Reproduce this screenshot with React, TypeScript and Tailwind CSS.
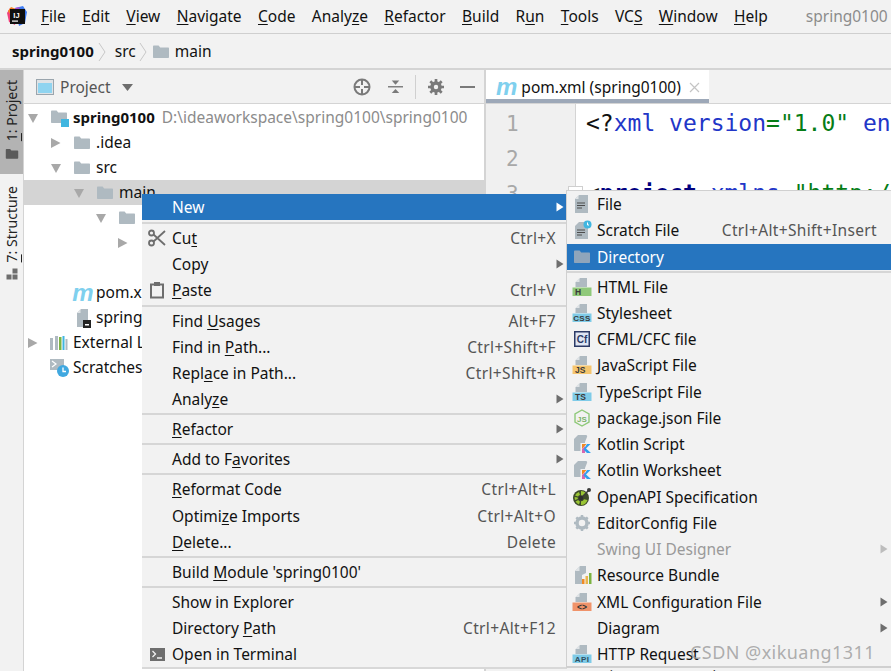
import { ReactNode } from "react"

const folderPath = "M1 3.5C1 3 1.4 2.5 2 2.5h4.6l1.6 2H16c.6 0 1 .4 1 1V14c0 .6-.4 1-1 1H2c-.6 0-1-.4-1-1z"

function Folder({ color = "#afbac1" }: { color?: string }) {
  return (
    <svg width="18" height="18" viewBox="0 0 18 18" className="shrink-0">
      <path d={folderPath} fill={color} />
    </svg>
  )
}

function Arrow({ dir, color = "#a8a8a8" }: { dir: "down" | "right"; color?: string }) {
  return (
    <svg width="12" height="12" viewBox="0 0 12 12" className="shrink-0">
      <path d={dir === "down" ? "M0 2h10L5 11z" : "M0 1v10L9.500 6z"} fill={color} />
    </svg>
  )
}

function Mnemonic({ text }: { text: string }) {
  const i = text.indexOf("_")
  if (i < 0) return <>{text}</>
  return (
    <>
      {text.slice(0, i)}
      <u className="underline-offset-2">{text[i + 1]}</u>
      {text.slice(i + 2)}
    </>
  )
}

function MavenIcon() {
  return (
    <span className="font-['Liberation_Sans',sans-serif] text-[24px] leading-[18px] font-bold italic text-[#7fd0ee] w-[20px] flex justify-center">
      m
    </span>
  )
}

function PageBase({ children }: { children?: ReactNode }) {
  return (
    <svg width="20" height="20" viewBox="0 0 20 20" className="shrink-0">
      <path d="M8 1h7v9H3.500V5.500z" fill="#afbac1" />
      <path d="M3.500 5 7.500 1v4z" fill="#dfe3e6" />
      {children}
    </svg>
  )
}

function FileIcon() {
  return (
    <svg width="20" height="20" viewBox="0 0 20 20" className="shrink-0">
      <path d="M7 1h9v18H3V5z" fill="#afbac1" />
      <path d="M3 5l3.500-4v4z" fill="#dfe3e6" />
      <path d="M5 9h8M5 11.500h8M5 14h5" stroke="#4d4d4d" strokeWidth="1.200" />
    </svg>
  )
}

function BandFile({ band, label, text = "#3a3a3a", full }: { band: string; label: string; text?: string; full?: boolean }) {
  return (
    <PageBase>
      <rect x="0.500" y="10.500" width="19" height="8.500" fill={band} />
      <text
        x={full ? 10 : 3}
        y="17.800"
        fontSize={label.length > 2 ? 8 : 8.500}
        fontWeight="700"
        letterSpacing={label.length > 2 ? 0.4 : 0}
        textAnchor={full ? "middle" : "start"}
        fill={text}
        fontFamily="Liberation Sans, sans-serif"
      >
        {label}
      </text>
    </PageBase>
  )
}

function KotlinIcon() {
  return (
    <svg width="20" height="20" viewBox="0 0 20 20" className="shrink-0">
      <path d="M6 1h8c1 0 1.500 1 1 2l-2 5v2H9v7H3c-.6 0-1-.4-1-1V5z" fill="#afbac1" />
      <rect x="8.500" y="9" width="11" height="11" fill="#f2f2f2" />
      <path d="M10 10h4.500L10 15z" fill="#f08a24" />
      <path d="M10 15l3-3v7h-3z" fill="#d866b0" />
      <path d="M15 10h3.500L14 14.500l5 4.500h-4l-3.500-3.500z" fill="#2f9fee" />
    </svg>
  )
}

function SubArrow({ color = "#6e6e6e" }: { color?: string }) {
  return (
    <svg width="8" height="10" viewBox="0 0 8 10" className="absolute right-[3px] top-[8px]">
      <path d="M0.500 0.500v9L7.500 5z" fill={color} />
    </svg>
  )
}

type RowProps = {
  label: string
  shortcut?: string
  icon?: ReactNode
  sub?: boolean
  disabled?: boolean
  active?: boolean
  // one pixel lower than the regular 26px pitch
  lower?: boolean
  inset?: boolean
}

function Row({ label, shortcut, icon, sub, disabled, active, lower, inset }: RowProps) {
  return (
    <div
      className={
        "relative flex items-center shrink-0 h-[26px] " +
        (inset ? "pr-[14px] " : "pr-[11px] ") +
        (lower ? "mt-[1px] " : "") +
        (active ? "bg-[#2675bf] text-white " : disabled ? "text-[#9a9a9a] " : "text-[#111] ")
      }
    >
      <span className="w-[30px] shrink-0 flex justify-center">{icon}</span>
      <span className="whitespace-nowrap pt-[2px]">
        <Mnemonic text={label} />
      </span>
      {shortcut && <span className="ml-auto pt-[2px] text-[#555] tracking-[0.35px]">{shortcut}</span>}
      {sub && <SubArrow color={active ? "#fff" : disabled ? "#bdbdbd" : "#6e6e6e"} />}
    </div>
  )
}

function Sep({ h }: { h: string }) {
  return (
    <div className={"flex items-center shrink-0 " + h}>
      <div className="h-[2px] w-full bg-[#d6d6d6]" />
    </div>
  )
}

function ContextMenu() {
  return (
    <div className="absolute left-[142px] top-[194px] w-[425px] h-[475px] bg-[#f2f2f2] flex flex-col border-b-2 border-[#d8d8d8] text-[15.500px]">
      <Row label="New" active sub />
      <Sep h="h-[5px]" />
      <Row
        label="Cu_t"
        shortcut="Ctrl+X"
        icon={
          <svg width="20" height="20" viewBox="0 0 20 20">
            <circle cx="4.500" cy="5" r="2.500" fill="none" stroke="#6e6e6e" strokeWidth="1.800" />
            <circle cx="4.500" cy="15" r="2.500" fill="none" stroke="#6e6e6e" strokeWidth="1.800" />
            <path d="M6.500 6.500 18 17M6.500 13.500 18 3" stroke="#6e6e6e" strokeWidth="1.800" />
          </svg>
        }
      />
      <Row label="Copy" sub />
      <Row
        label="_Paste"
        shortcut="Ctrl+V"
        icon={
          <svg width="18" height="18" viewBox="0 0 18 18">
            <rect x="3" y="3.500" width="12" height="13" fill="none" stroke="#6e6e6e" strokeWidth="2" />
            <rect x="6" y="1" width="6" height="4" fill="#6e6e6e" />
          </svg>
        }
      />
      <Sep h="h-[5px]" />
      <Row label="Find _Usages" shortcut="Alt+F7" />
      <Row label="Find in _Path..." shortcut="Ctrl+Shift+F" />
      <Row label="Repl_ace in Path..." shortcut="Ctrl+Shift+R" />
      <Row label="Analy_ze" sub />
      <Sep h="h-[4px]" />
      <Row label="_Refactor" sub />
      <Sep h="h-[4px]" />
      <Row label="Add to F_avorites" sub />
      <Sep h="h-[4px]" />
      <Row label="_Reformat Code" shortcut="Ctrl+Alt+L" />
      <Row label="Optimi_ze Imports" shortcut="Ctrl+Alt+O" lower />
      <Row label="_Delete..." shortcut="Delete" />
      <Sep h="h-[4px]" />
      <Row label="Build _Module 'spring0100'" />
      <Sep h="h-[4px]" />
      <Row label="Show in Explorer" />
      <Row label="Directory _Path" shortcut="Ctrl+Alt+F12" />
      <Row
        label="Open in Terminal"
        icon={
          <svg width="15" height="13" viewBox="0 0 15 13">
            <rect width="15" height="13" fill="#6e6e6e" />
            <path d="M2.500 3l3 3-3 3M7 10h5" stroke="#f2f2f2" strokeWidth="1.300" fill="none" />
          </svg>
        }
      />
    </div>
  )
}

function NewSubmenu() {
  return (
    <div className="absolute left-[566px] top-[190px] w-[325px] h-[478px] bg-[#f2f2f2] border-l border-t border-b-2 border-[#d0d0d0] flex flex-col text-[15.500px]">
      <Row label="File" inset icon={<FileIcon />} />
      <Row
        label="Scratch File"
        inset
        shortcut="Ctrl+Alt+Shift+Insert"
        icon={
          <svg width="20" height="20" viewBox="0 0 20 20">
            <path d="M7 2h9v17H3V6z" fill="#afbac1" />
            <path d="M5 10h8M5 12.500h8M5 15h5" stroke="#4d4d4d" strokeWidth="1.200" />
            <circle cx="15.500" cy="4.500" r="4" fill="#40b6e0" />
            <path d="M15.500 2.500v2.500h1.500" stroke="#fff" strokeWidth="1" fill="none" />
          </svg>
        }
      />
      <Row label="Directory" active lower inset icon={<Folder color="#8fa5bb" />} />
      <Sep h="h-[4px]" />
      <Row label="HTML File" inset icon={<BandFile band="#8fc97a" label="H" />} />
      <Row label="Stylesheet" inset icon={<BandFile band="#7fcbe8" label="CSS" full />} />
      <Row
        label="CFML/CFC file"
        inset
        icon={
          <svg width="16" height="16" viewBox="0 0 16 16">
            <rect x="0.750" y="0.750" width="14.500" height="14.500" fill="#dfe6f4" stroke="#2c3a66" strokeWidth="1.500" />
            <text x="8" y="12" fontSize="10" fontWeight="700" textAnchor="middle" fill="#2c3a66" fontFamily="Liberation Sans, sans-serif">
              Cf
            </text>
          </svg>
        }
      />
      <Row label="JavaScript File" inset icon={<BandFile band="#f5c56e" label="JS" />} />
      <Row label="TypeScript File" inset lower icon={<BandFile band="#7fcbe8" label="TS" />} />
      <Row
        label="package.json File"
        inset
        icon={
          <svg width="18" height="18" viewBox="0 0 18 18">
            <path d="M9 1l7 4v8l-7 4-7-4V5z" fill="none" stroke="#8fc97a" strokeWidth="1.400" />
            <text x="9" y="12.500" fontSize="8" fontWeight="700" textAnchor="middle" fill="#7cb36a" fontFamily="Liberation Sans, sans-serif">
              JS
            </text>
          </svg>
        }
      />
      <Row label="Kotlin Script" inset icon={<KotlinIcon />} />
      <Row label="Kotlin Worksheet" inset icon={<KotlinIcon />} />
      <Row
        label="OpenAPI Specification"
        lower
        inset
        icon={
          <svg width="20" height="20" viewBox="0 0 20 20">
            <circle cx="9" cy="11" r="8" fill="#3d4a2a" />
            <path d="M9 4a7 7 0 0 1 5 2l-3 3a3 3 0 0 0-2-.800zM3 8.500a7 7 0 0 1 4-3.500l1 3a3 3 0 0 0-2 1.500zM3 13a7 7 0 0 1-.300-3l3 .500a3 3 0 0 0 .200 1.500zM7 17.500a7 7 0 0 1-3.500-3l2.800-1.500a3 3 0 0 0 1.700 1.500zM15.500 13a7 7 0 0 1-6.500 5v-3.800a3 3 0 0 0 3-2z" fill="#9ac534" />
            <path d="M9 11 17 3" stroke="#3a3a3a" strokeWidth="1.500" />
            <circle cx="17" cy="3" r="2" fill="#3a3a3a" />
            <circle cx="9" cy="11" r="2.200" fill="#2f2f2f" />
          </svg>
        }
      />
      <Row
        label="EditorConfig File"
        inset
        icon={
          <svg width="18" height="18" viewBox="0 0 18 18">
            <circle cx="9" cy="9" r="5" fill="none" stroke="#afbac1" strokeWidth="3.500" />
            <path d="M9 1v3M9 14v3M1 9h3M14 9h3M3.300 3.300l2.200 2.200M12.500 12.500l2.200 2.200M3.300 14.700l2.200-2.200M12.500 5.500l2.200-2.200" stroke="#afbac1" strokeWidth="2.500" />
          </svg>
        }
      />
      <Row label="Swing UI Designer" disabled sub inset />
      <Row
        label="Resource Bundle"
        inset
        icon={
          <svg width="20" height="20" viewBox="0 0 20 20">
            <path d="M8 1h6v7l-4 2v9H3V6z" fill="#afbac1" />
            <path d="M3 6l4.500-5v5z" fill="#dfe3e6" />
            <rect x="10" y="14" width="2.500" height="5" fill="#f08a24" />
            <rect x="13.500" y="11" width="2.500" height="8" fill="#e9b44c" />
            <rect x="17" y="8" width="2.500" height="11" fill="#7cb342" />
          </svg>
        }
      />
      <Row label="XML Configuration File" sub lower inset icon={<BandFile band="#f0936a" label="<>" text="#333" full />} />
      <Row label="Diagram" sub inset />
      <Row label="HTTP Request" inset icon={<BandFile band="#7fcbe8" label="API" text="#2f4f5f" full />} />
    </div>
  )
}

function TreeRow({ pad, arrow, icon, selected, children }: { pad: string; arrow?: "down" | "right"; icon?: ReactNode; selected?: boolean; children?: ReactNode }) {
  return (
    <div className={"flex items-center h-[25px] whitespace-nowrap " + pad + (selected ? " bg-[#d4d4d4]" : "")}>
      <span className="w-[22px] shrink-0 flex">{arrow && <Arrow dir={arrow} />}</span>
      <span className="w-[23px] shrink-0 flex justify-start">{icon}</span>
      {children}
    </div>
  )
}

function Chevron({ className }: { className: string }) {
  return (
    <svg width="10" height="20" viewBox="0 0 10 20" className={className}>
      <path d="M2 1l6 9-6 9" fill="none" stroke="#c8c8c8" />
    </svg>
  )
}

export default function App() {
  const menus = ["_File", "_Edit", "_View", "_Navigate", "_Code", "Analy_ze", "_Refactor", "_Build", "R_un", "_Tools", "VC_S", "_Window", "_Help"]

  return (
    <div className="relative w-[891px] h-[671px] overflow-hidden bg-[#f2f2f2] flex flex-col font-['Noto_Sans',sans-serif] text-[15.500px] text-[#111]">
      {/* menu bar */}
      <div className="h-[34px] shrink-0 flex items-center border-b border-[#cfcfcf] pl-[6px]">
        <svg width="22" height="22" viewBox="0 0 22 22" className="shrink-0 mr-[13px]">
          <path d="M1 7l3-5 7 1-2 16-6-3z" fill="#f0407a" />
          <path d="M2 5l3-4 5 2-6 5z" fill="#f58220" />
          <path d="M9 2l8-2 4 6-2 11-6 3z" fill="#3f7cf2" />
          <path d="M9 2l5-1-3 5z" fill="#b04cd0" />
          <rect x="4" y="3" width="15" height="15" fill="#0f0f0f" />
          <rect x="6" y="14.500" width="6" height="1.200" fill="#fff" />
          <text x="10.500" y="11.500" fontSize="7.500" fontWeight="700" fill="#fff" textAnchor="middle" fontFamily="Liberation Sans, sans-serif">IJ</text>
        </svg>
        <div className="flex gap-[16.400px]">
          {menus.map((m) => (
            <span key={m}>
              <Mnemonic text={m} />
            </span>
          ))}
        </div>
        <span className="ml-[38px] text-[#8c8c8c]">spring0100</span>
      </div>

      {/* navigation bar */}
      <div className="h-[36px] shrink-0 flex items-center border-b-2 border-[#d4d4d4] pl-[12px] pt-[1px]">
        <span className="font-bold text-[15px]">spring0100</span>
        <Chevron className="ml-[3px] mr-[8px]" />
        <span>src</span>
        <Chevron className="ml-[2px] mr-[4px]" />
        <span className="mr-[5px]"><Folder /></span>
        <span>main</span>
      </div>

      <div className="flex-1 flex min-h-0">
        {/* tool window stripe */}
        <div className="w-[24px] shrink-0 border-r border-[#d4d4d4] flex flex-col text-[14px] text-[#222]">
          <div className="flex flex-col items-center gap-[6px] bg-[#b3b3b3] h-[104px] pt-[10px]">
            <span className="[writing-mode:vertical-rl] rotate-180 leading-[22px] whitespace-nowrap">
              <u className="underline-offset-2">1</u>: Project
            </span>
            <svg width="14" height="14" viewBox="0 0 18 18">
              <path d={folderPath} fill="#5a5a5a" />
            </svg>
          </div>
          <div className="flex flex-col items-center gap-[6px] pt-[12px]">
            <span className="[writing-mode:vertical-rl] rotate-180 leading-[22px] whitespace-nowrap">
              <u className="underline-offset-2">7</u>: Structure
            </span>
            <svg width="12" height="12" viewBox="0 0 12 12" fill="#6e6e6e">
              <rect x="6.500" y="0.500" width="5" height="5" />
              <rect x="0.500" y="6.500" width="5" height="5" />
              <rect x="6.500" y="6.500" width="5" height="5" />
            </svg>
          </div>
        </div>

        {/* project panel */}
        <div className="w-[460px] shrink-0 flex flex-col bg-white">
          <div className="h-[34px] shrink-0 bg-[#f2f2f2] border-b border-[#d4d4d4] flex items-center pl-[12px] pr-[9px] pt-[1px]">
            <svg width="18" height="16" viewBox="0 0 18 16" className="mr-[6px]">
              <rect x="0.500" y="0.500" width="17" height="15" fill="#dfe3e6" stroke="#9aa5ad" />
              <rect x="2" y="4" width="14" height="10" fill="#8fd4f0" />
            </svg>
            <span className="text-[#555] pt-[2px]">Project</span>
            <svg width="11" height="7" viewBox="0 0 11 7" className="ml-[11px]">
              <path d="M0 0h11L5.500 7z" fill="#6e6e6e" />
            </svg>
            <div className="ml-auto flex items-center">
              <svg width="18" height="18" viewBox="0 0 18 18" fill="none" stroke="#7a7a7a" strokeWidth="2" className="mr-[17px]">
                <circle cx="9" cy="9" r="7.500" />
                <path d="M9 2v5M9 11v5M2 9h5M11 9h5" />
              </svg>
              <svg width="15" height="16" viewBox="0 0 16 16" fill="#7a7a7a" className="mr-[12px]">
                <rect y="7" width="16" height="1.500" />
                <path d="M4 1h8L8 5.500zM4 14.500h8L8 10z" />
              </svg>
              <span className="w-px h-[24px] bg-[#d0d0d0] mr-[12px]" />
              <svg width="16" height="16" viewBox="0 0 18 18" className="mr-[16px]">
                <circle cx="9" cy="9" r="4.500" fill="none" stroke="#7a7a7a" strokeWidth="4" />
                <path d="M9 0v4M9 14v4M0 9h4M14 9h4M2.600 2.600l2.800 2.800M12.600 12.600l2.800 2.800M2.600 15.400l2.800-2.800M12.600 5.400l2.800-2.800" stroke="#7a7a7a" strokeWidth="3" />
              </svg>
              <span className="w-[15px] h-[2px] bg-[#7a7a7a]" />
            </div>
          </div>
          <div className="flex-1 pt-[1px] overflow-hidden">
            <TreeRow
              pad="pl-[4px]"
              arrow="down"
              icon={
                <svg width="20" height="20" viewBox="0 0 20 20">
                  <path d={folderPath} fill="#afbac1" />
                  <rect x="11" y="11" width="8" height="8" fill="#40b6e0" />
                </svg>
              }
            >
              <span className="font-bold text-[15px]">spring0100</span>
              <span className="ml-[7px] text-[#8c8c8c]">D:\ideaworkspace\spring0100\spring0100</span>
            </TreeRow>
            <TreeRow pad="pl-[27px]" arrow="right" icon={<Folder />}>.idea</TreeRow>
            <TreeRow pad="pl-[27px]" arrow="down" icon={<Folder />}>src</TreeRow>
            <TreeRow pad="pl-[50px]" arrow="down" icon={<Folder />} selected>main</TreeRow>
            <TreeRow pad="pl-[72px]" arrow="down" icon={<Folder />} />
            <TreeRow pad="pl-[94px]" arrow="right" />
            <TreeRow pad="pl-[94px]" />
            <TreeRow pad="pl-[27px]" icon={<MavenIcon />}>pom.xml</TreeRow>
            <TreeRow
              pad="pl-[27px]"
              icon={
                <svg width="20" height="20" viewBox="0 0 20 20">
                  <path d="M8 1h7v18H4V5z" fill="#afbac1" />
                  <path d="M4 5l3.500-4v4z" fill="#dfe3e6" />
                  <rect x="10" y="12" width="8" height="8" fill="#222" />
                  <rect x="12" y="16" width="4" height="1.500" fill="#fff" />
                </svg>
              }
            >
              spring0100.iml
            </TreeRow>
            <TreeRow
              pad="pl-[4px]"
              arrow="right"
              icon={
                <svg width="18" height="16" viewBox="0 0 18 16">
                  <rect x="0" y="3" width="3" height="12" fill="#afbac1" />
                  <rect x="5" y="1" width="3" height="14" fill="#afbac1" />
                  <rect x="9" y="2" width="2.500" height="13" fill="#7cb342" />
                  <rect x="12.500" y="1" width="2" height="14" fill="#40b6e0" />
                  <rect x="15.500" y="4" width="2" height="11" fill="#afbac1" />
                </svg>
              }
            >
              External Libraries
            </TreeRow>
            <TreeRow
              pad="pl-[4px]"
              icon={
                <svg width="20" height="20" viewBox="0 0 20 20">
                  <path d="M0 1h14v11H0z" fill="#afbac1" />
                  <path d="M2 3l4 3-4 3" stroke="#fff" strokeWidth="1.200" fill="none" />
                  <circle cx="13" cy="13" r="6" fill="#40a8e0" />
                  <path d="M13 9.500V13.500h3" stroke="#fff" strokeWidth="1.300" fill="none" />
                </svg>
              }
            >
              Scratches and Consoles
            </TreeRow>
          </div>
        </div>

        {/* editor */}
        <div className="flex-1 min-w-0 flex flex-col border-l-2 border-[#d4d4d4] bg-white">
          <div className="h-[34px] shrink-0 bg-[#f2f2f2] border-b border-[#d4d4d4] flex">
            <div className="w-[223px] h-[33px] bg-white border-b-4 border-[#9da8b8] flex items-center pl-[10px] pt-[5px]">
              <span className="font-['Liberation_Sans',sans-serif] text-[24px] leading-[18px] font-bold italic text-[#7fd0ee] mr-[4px]">m</span>
              <span className="pt-[2px]">pom.xml (spring0100)</span>
              <svg width="11" height="11" viewBox="0 0 11 11" className="ml-[8px]">
                <path d="M1 1l9 9M10 1l-9 9" stroke="#c4c4c4" strokeWidth="1.200" />
              </svg>
            </div>
          </div>
          <div className="flex-1 flex min-h-0 font-['DejaVu_Sans_Mono',monospace] text-[23px] leading-[35px]">
            <div className="relative w-[90px] shrink-0 bg-[#f0f0f0] border-r border-[#d4d4d4] pt-[3px] pl-[20px] text-[#a8a8a8] text-[21px]">
              <div>1</div>
              <div>2</div>
              <div>3</div>
              <span className="absolute right-[-8px] top-[82px] w-[15px] h-[15px] border border-[#cfcfcf] bg-white" />
            </div>
            <div className="flex-1 pt-[2px] pl-[10px] whitespace-nowrap overflow-hidden">
              <div>
                &lt;?<span className="text-[#2236c8]">xml version</span>
                <span className="text-[#067d17]">="1.0"</span> <span className="text-[#2236c8]">encoding</span>
              </div>
              <div>&nbsp;</div>
              <div>
                &lt;<span className="text-[#000080] font-bold">project</span> <span className="text-[#2236c8]">xmlns</span>
                <span className="text-[#067d17]">="http://maven</span>
              </div>
            </div>
          </div>
          <div className="h-[3px] shrink-0 pl-[101px] bg-[#f2f2f2] flex gap-[30px] text-[14px] leading-[16px] text-[#333] overflow-hidden">
            <span>project</span>
            <span>groupId</span>
          </div>
        </div>
      </div>

      <ContextMenu />
      <NewSubmenu />

      {/* watermark */}
      <span className="absolute left-[690px] top-[641px] text-[18px] leading-[22px] text-[#9a9a9a]/80 whitespace-nowrap tracking-[0.45px]">CSDN @xikuang1311</span>
    </div>
  )
}
